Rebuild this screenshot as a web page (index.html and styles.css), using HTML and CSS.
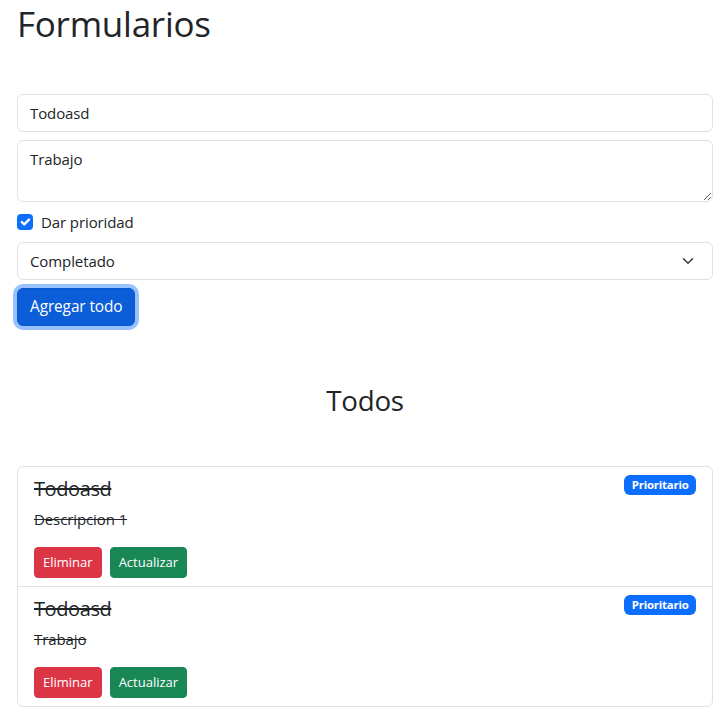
FILE: index.html
```html
<!DOCTYPE html>
<html lang="es">
<head>
<meta charset="utf-8">
<title>Formularios</title>
<link rel="stylesheet" href="styles.css">
</head>
<body>
<div class="container">
  <h1 class="title">Formularios</h1>
  <form class="form">
    <input class="control" type="text" value="Todoasd">
    <textarea class="control area">Trabajo</textarea>
    <label class="check">
      <span class="check-box">
        <svg viewBox="0 0 20 20" width="16" height="16"><path d="m6 10 3 3 6-6" fill="none" stroke="#fff" stroke-width="3" stroke-linecap="round" stroke-linejoin="round"/></svg>
      </span>
      <span>Dar prioridad</span>
    </label>
    <div class="control select">
      <span>Completado</span>
      <svg class="chev" viewBox="0 0 16 16" width="16" height="12"><path d="m2 5 6 6 6-6" fill="none" stroke="#343a40" stroke-width="2" stroke-linecap="round" stroke-linejoin="round"/></svg>
    </div>
    <div><button type="button" class="btn btn-primary">Agregar todo</button></div>
  </form>
  <h2 class="subtitle">Todos</h2>
  <ul class="list">
    <li class="item">
      <span class="badge">Prioritario</span>
      <h5 class="item-title">Todoasd</h5>
      <p class="item-desc">Descripcion 1</p>
      <div class="actions">
        <button type="button" class="btn btn-sm btn-danger">Eliminar</button>
        <button type="button" class="btn btn-sm btn-success">Actualizar</button>
      </div>
    </li>
    <li class="item">
      <span class="badge">Prioritario</span>
      <h5 class="item-title">Todoasd</h5>
      <p class="item-desc">Trabajo</p>
      <div class="actions">
        <button type="button" class="btn btn-sm btn-danger">Eliminar</button>
        <button type="button" class="btn btn-sm btn-success">Actualizar</button>
      </div>
    </li>
  </ul>
</div>
</body>
</html>
```

FILE: styles.css
```css
* { box-sizing: border-box; }
html, body { margin: 0; padding: 0; }
body {
  font-family: "Open Sans", "Noto Sans", sans-serif;
  font-size: 16px;
  line-height: 1.5;
  color: #212529;
  background: #fff;
}
.container {
  padding: 0 8px 12px 17px;
}
.title {
  margin: 0;
  padding: 3px 0 0;
  height: 94px;
  font-size: 35px;
  font-weight: 500;
  line-height: 42px;
  letter-spacing: -0.25px;
}
.form {
  display: flex;
  flex-direction: column;
}
.control {
  display: block;
  width: 100%;
  height: 38px;
  padding: 6px 12px;
  font: inherit;
  font-size: 15px;
  line-height: 24px;
  color: #212529;
  background: #fff;
  border: 1px solid #dee2e6;
  border-radius: 6px;
  margin: 0 0 8px;
  letter-spacing: -0.1px;
}
.area {
  height: 62px;
  resize: vertical;
  margin-bottom: 8px;
}
.check {
  display: flex;
  align-items: center;
  gap: 8px;
  height: 24px;
  margin-bottom: 8px;
  font-size: 15px;
  letter-spacing: -0.1px;
}
.check-box {
  width: 16px;
  height: 16px;
  border-radius: 4px;
  background: #0d6efd;
  display: flex;
}
.select {
  display: flex;
  align-items: center;
  justify-content: space-between;
  margin-bottom: 8px;
  padding-right: 16px;
}
.btn {
  font: inherit;
  font-size: 15.4px;
  letter-spacing: -0.1px;
  line-height: 24px;
  padding: 6px 12px;
  border: 1px solid transparent;
  border-radius: 6px;
  color: #fff;
  cursor: pointer;
}
.btn-primary {
  background: #0b5ed7;
  border-color: #0a58ca;
  box-shadow: 0 0 0 4px rgba(49, 132, 253, 0.5);
}
.btn-sm {
  font-size: 13px;
  line-height: 21px;
  padding: 4px 8px;
  border-radius: 4px;
  letter-spacing: 0;
}
.btn-danger { background: #dc3545; border-color: #dc3545; }
.btn-success { background: #198754; border-color: #198754; }
.subtitle {
  margin: 58px 0 49px;
  text-align: center;
  font-size: 27.7px;
  font-weight: 500;
  line-height: 1.2;
  letter-spacing: -0.2px;
}
.list {
  list-style: none;
  margin: 0;
  padding: 0;
  border: 1px solid #dee2e6;
  border-radius: 6px;
}
.item {
  padding: 8px 16px;
}
.item + .item {
  border-top: 1px solid #dee2e6;
}
.badge {
  float: right;
  background: #0d6efd;
  color: #fff;
  font-size: 11.4px;
  font-weight: 700;
  line-height: 1;
  padding: 4px 7.4px;
  border-radius: 6px;
  letter-spacing: -0.2px;
}
.item-title {
  margin: 0 0 8px;
  font-size: 20px;
  font-weight: 500;
  line-height: 24px;
  padding-top: 2px;
  height: 24px;
  text-decoration: line-through;
  letter-spacing: -0.4px;
}
.item-desc {
  margin: 0 0 16px;
  font-size: 15px;
  line-height: 24px;
  text-decoration: line-through;
  letter-spacing: -0.1px;
}
.actions {
  display: flex;
  gap: 8px;
}
```
